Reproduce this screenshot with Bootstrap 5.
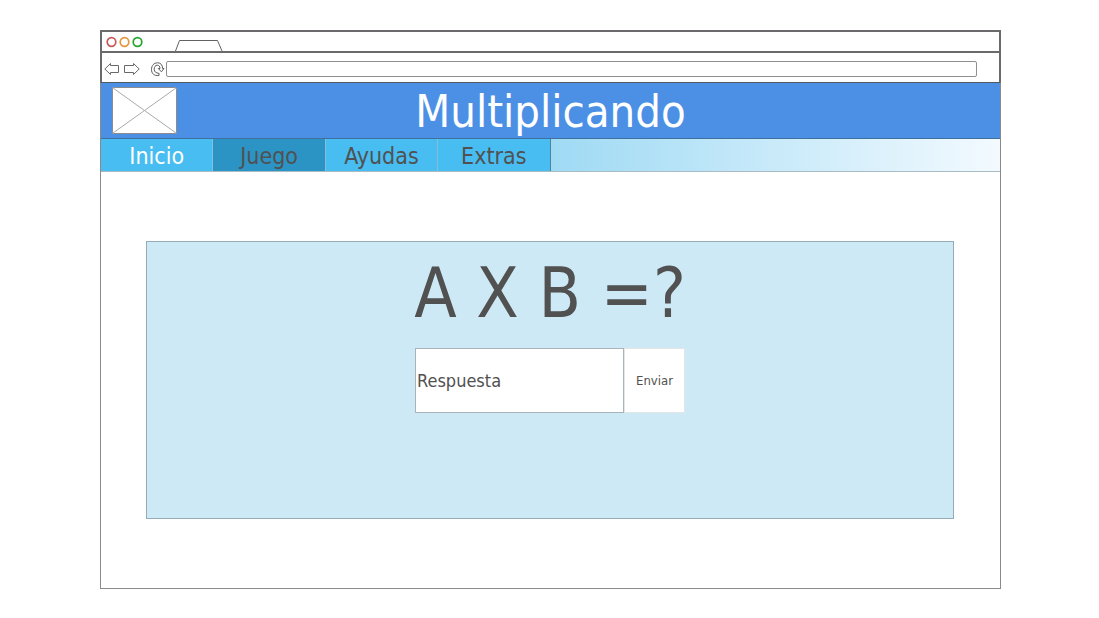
<!DOCTYPE html>
<html lang="es">
<head>
<meta charset="utf-8">
<meta name="viewport" content="width=device-width, initial-scale=1">
<title>Multiplicando</title>
<link href="https://cdn.jsdelivr.net/npm/bootstrap@5.3.0/dist/css/bootstrap.min.css" rel="stylesheet">
<style>
  body { font-family: Tahoma, "DejaVu Sans Condensed", "DejaVu Sans", sans-serif; color: #515151; background: #fff; }
  .page { padding: 30px 98px 28px 100px; }
  .chrome { border: 2px solid #6b696b; border-bottom: 0; }
  .tab-strip { height: 19px; padding-left: 4px; }
  .toolbar { height: 31px; border-top: 2px solid #6b696b; padding: 2px 22px 0 2px; }
  .address { height: 16px; min-height: 0; padding: 0 4px; border: 1px solid #8f8f8f; border-radius: 2px; font-size: 10px; }
  .icon-btn { line-height: 0; }
  .site { border: 1px solid #8a8a8a; border-top-color: #505a5f; }
  .site-header { background: #4c90e6; height: 56px; border-bottom: 1px solid #3f6f9c; }
  .logo { left: 11px; top: 4px; }
  .site-title { font-size: 45px; line-height: 58px; }
  .site-nav { height: 33px; border-bottom: 1px solid #a9bcc4; background: linear-gradient(90deg, #9fdaf4, #f3faff) right / 50% 100% no-repeat; }
  .site-nav .nav-item { flex: 0 0 12.5%; }
  .site-nav .nav-link { height: 32px; padding: 0; font-size: 23px; line-height: 35px; color: #515151; background: #47bdf2; border-right: 1px solid #86bdd8; }
  .site-nav .nav-link.current { color: #fff; }
  .site-nav .nav-link.pressed { background: #2b94c4; }
  .site-nav .nav-item:last-child .nav-link { border-right-color: #55809a; }
  .content { padding: 69px 46px 69px 45px; }
  .game { background: #cde9f5; border: 1px solid #93acb6; padding: 9px 0 105px; }
  .question { font-size: 69px; line-height: 84px; margin-bottom: 13px; }
  .answer { width: 270px; }
  .answer .form-control { height: 65px; padding: 0 1px; border: 1px solid #a9b4b8; border-radius: 0; font-size: 18px; color: #515151; }
  .answer .form-control::placeholder { color: #515151; opacity: 1; }
  .answer .btn { width: 61px; padding: 0; background: #fff; border: 1px solid #e3e6e8; border-radius: 0; font-size: 13px; color: #515151; }
</style>
</head>
<body>
<div class="page">
  <div class="chrome">
    <div class="tab-strip d-flex">
      <svg width="120" height="19" viewBox="0 0 120 19" fill="none" aria-hidden="true">
        <circle cx="5.500" cy="10" r="4.300" stroke="#c6595c" stroke-width="1.700"/>
        <circle cx="18.500" cy="10" r="4.300" stroke="#e3973f" stroke-width="1.700"/>
        <circle cx="31.500" cy="10" r="4.300" stroke="#25a52d" stroke-width="1.700"/>
        <path d="M69.500 19L73.500 8.500H111.500L116 19" stroke="#626262"/>
      </svg>
    </div>
    <div class="toolbar d-flex align-items-center">
      <button type="button" class="icon-btn btn p-0 border-0" aria-label="Atrás">
        <svg width="16" height="14" viewBox="0 0 16 14" fill="#fff" stroke="#686868"><path d="M.8 7L6.500 1.500V3.500H14.500V10.500H6.500V12.500Z"/></svg>
      </button>
      <button type="button" class="icon-btn btn p-0 border-0 ms-1" aria-label="Adelante">
        <svg width="16" height="14" viewBox="0 0 16 14" fill="#fff" stroke="#686868"><path d="M15.200 7L9.500 1.500V3.500H.5V10.500H9.500V12.500Z"/></svg>
      </button>
      <button type="button" class="icon-btn btn p-0 border-0 ms-2" aria-label="Recargar">
        <svg width="18" height="16" viewBox="0 0 18 16" fill="#fff" stroke="#5c5c5c"><path d="M11 14.500C6 15 3.500 12.500 3.500 8.500C3.500 4.500 6 1.800 9.500 1.800C12.800 1.800 14.600 4 14.600 7.500H16L13.400 10.800L10.300 7.500H12C12 5.300 11 4.200 9.300 4.200C7.300 4.200 6.200 6 6.200 8.200C6.200 10.800 8 12.200 11 12.300Z"/></svg>
      </button>
      <input type="text" class="address form-control" aria-label="Dirección">
    </div>
  </div>
  <div class="site">
    <header class="site-header position-relative">
      <svg class="logo position-absolute" width="66" height="48" viewBox="0 0 66 48" role="img" aria-label="Logo">
        <rect x=".5" y=".5" width="64" height="46" rx="1" fill="#fff" stroke="#8c8c8c"/>
        <path d="M1 1L64 46M64 1L1 46" stroke="#aaa"/>
      </svg>
      <h1 class="site-title text-center text-white fw-normal m-0">Multiplicando</h1>
    </header>
    <nav class="site-nav" aria-label="Principal">
      <ul class="nav flex-nowrap text-center">
        <li class="nav-item"><a class="nav-link current" href="#">Inicio</a></li>
        <li class="nav-item"><a class="nav-link pressed" href="#">Juego</a></li>
        <li class="nav-item"><a class="nav-link" href="#">Ayudas</a></li>
        <li class="nav-item"><a class="nav-link" href="#">Extras</a></li>
      </ul>
    </nav>
    <main class="content">
      <section class="game">
        <h2 class="question text-center fw-normal">A X B =?</h2>
        <form class="answer d-flex mx-auto">
          <input type="text" class="form-control" placeholder="Respuesta" aria-label="Respuesta">
          <button type="button" class="btn flex-shrink-0">Enviar</button>
        </form>
      </section>
    </main>
  </div>
</div>
<script src="https://cdn.jsdelivr.net/npm/bootstrap@5.3.0/dist/js/bootstrap.bundle.min.js"></script>
</body>
</html>
